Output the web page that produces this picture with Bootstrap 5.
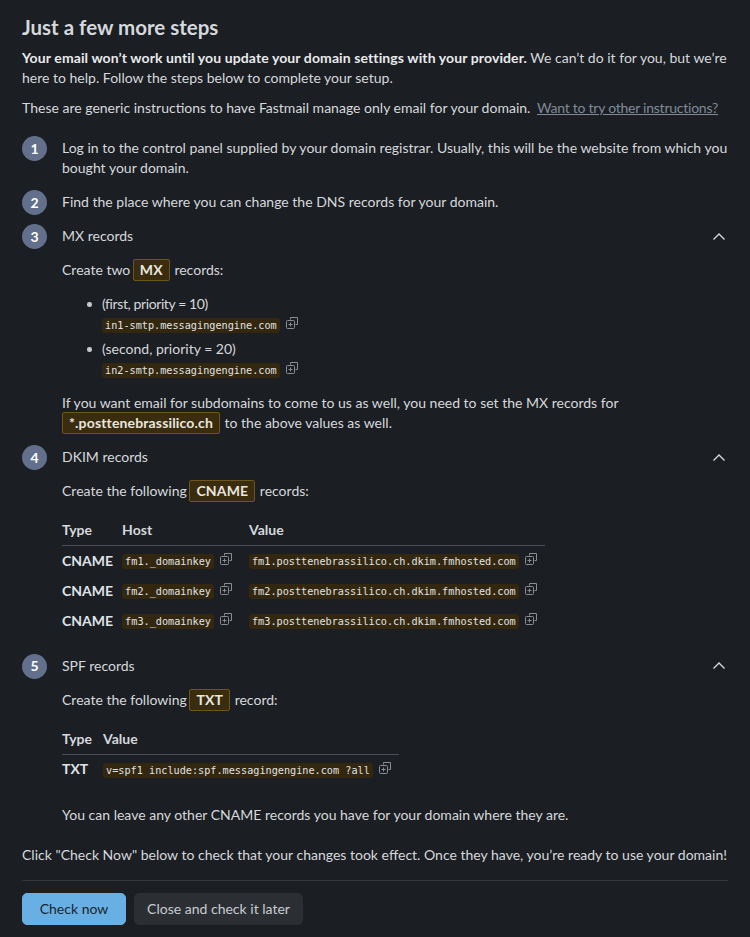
<!DOCTYPE html>
<html lang="en">
<head>
  <meta charset="UTF-8">
  <meta name="viewport" content="width=device-width, initial-scale=1">
  <title>Just a few more steps</title>
  <link href="https://cdn.jsdelivr.net/npm/bootstrap@5.3.0/dist/css/bootstrap.min.css" rel="stylesheet">
  <script src="https://cdn.jsdelivr.net/npm/bootstrap@5.3.0/dist/js/bootstrap.bundle.min.js"></script>
  <style>
    body { background: #1b1e22; color: #d5d8dc; font-family: "Lato", "Liberation Sans", sans-serif; font-size: 14.03px; line-height: 20px; }
    .wrap { padding: 15px 22px 12px; }
    h1.title { font-size: 20.5px; font-weight: 700; line-height: 24px; margin: 0 0 9px; color: #d5d8dc; }
    .para { margin: 0 0 10px; }
    .para strong { color: #e8eaec; letter-spacing: .1px; }
    .para a { color: #7f8a99; letter-spacing: -.25px; margin-left: 3px; }
    .para-check { margin-top: 8px; }
    .steps { margin-top: 18px; }
    .step { display: flex; gap: 15px; }
    .num { flex: 0 0 25px; width: 25px; height: 25px; border-radius: 50%; background: #62708b; color: #fff; font-weight: 700; display: flex; align-items: center; justify-content: center; }
    .step-body { flex: 1; min-width: 0; padding-top: 2px; margin-bottom: 12px; }
    .step-head { display: flex; justify-content: space-between; align-items: center; }
    .chev { width: 12px; height: 7px; margin-right: 3px; }
    .line { margin: 14px 0 0; }
    .line-after { margin-top: 21px; }
    .tag { display: inline-block; background: #3a2c0f; border: 1px solid #6f5518; border-radius: 2px; padding: 0 6px; font-weight: 700; color: #e8e6df; line-height: 20px; letter-spacing: .15px; margin: -1px 1px -1px -1px; }
    .code-row { display: flex; align-items: center; }
    .mono { font-family: "DejaVu Sans Mono", "Liberation Mono", monospace; font-size: 10.2px; background: #33280f; color: #e0e2e4; border-radius: 3px; padding: 2px 3px; line-height: 11px; display: block; white-space: nowrap; }
    .copy { flex: 0 0 12px; width: 12px; height: 12px; margin: -5px 0 0 6px; }
    .rec-list { list-style: none; margin: 14px 0 0; padding: 0 0 0 40px; }
    .rec-list li { margin-bottom: 3px; position: relative; }
    .rec-list li::before { content: ""; position: absolute; left: -15px; top: 8px; width: 4.5px; height: 4.5px; border-radius: 50%; background: #c6c9ce; }
    .rec-list .code-row { height: 22px; }
    .tight { letter-spacing: -.4px; }
    .rec-table { border-collapse: collapse; margin: 14px 0 6px; }
    .rec-table th { font-weight: 700; padding: 5px 9px 5px 0; border-bottom: 1px solid #4a4e54; }
    .rec-table td { padding: 0 9px 0 0; height: 30px; }
    .rec-table .code-row { padding-top: 2px; }
    .rec-table th:nth-child(2), .rec-table td:nth-child(2) { padding-right: 17px; }
    .rec-table th:last-child, .rec-table td:last-child { padding-right: 8px; }
    .rec-table td:first-child { font-weight: 700; color: #dfe3e8; }
    .rec-table.spf th:first-child, .rec-table.spf td:first-child { padding-right: 11px; }
    .divider { border: 0; border-top: 1px solid #34373c; opacity: 1; margin: 15px 0 12px; }
    .btn-go, .btn-later { font-size: 14.03px; line-height: 20px; padding: 5px 0; border-radius: 5px; }
    .btn-go { background: #68b0e4; border-color: #68b0e4; color: #1b2530; width: 104px; }
    .btn-later { background: #2b2f34; border-color: #2b2f34; color: #c8cbd0; width: 169px; }
  </style>
</head>
<body>
  <div class="wrap">
    <h1 class="title">Just a few more steps</h1>
    <p class="para"><strong>Your email won’t work until you update your domain settings with your provider.</strong> We can’t do it for you, but we’re here to help. Follow the steps below to complete your setup.</p>
    <p class="para">These are generic instructions to have Fastmail manage only email for your domain. <a href="#">Want to try other instructions?</a></p>

    <div class="steps">
      <div class="step">
        <div class="num">1</div>
        <div class="step-body">Log in to the control panel supplied by your domain registrar. Usually, this will be the website from which you bought your domain.</div>
      </div>
      <div class="step">
        <div class="num">2</div>
        <div class="step-body">Find the place where you can change the DNS records for your domain.</div>
      </div>
      <div class="step">
        <div class="num">3</div>
        <div class="step-body">
          <div class="step-head"><span>MX records</span><svg class="chev" viewBox="0 0 12 7" fill="none" stroke="#d5d8dc" stroke-width="1.4"><path d="M.5 6.500L6 1l5.500 5.500"/></svg></div>
          <p class="line">Create two <span class="tag">MX</span> records:</p>
          <ul class="rec-list">
            <li><span class="tight">(first, priority = 10)</span><div class="code-row"><code class="mono">in1-smtp.messagingengine.com</code><svg class="copy" viewBox="0 0 12 12" fill="none" stroke="#8a8d92"><use href="#copy-ic"/></svg></div></li>
            <li>(second, priority = 20)<div class="code-row"><code class="mono">in2-smtp.messagingengine.com</code><svg class="copy" viewBox="0 0 12 12" fill="none" stroke="#8a8d92"><use href="#copy-ic"/></svg></div></li>
          </ul>
          <p class="line mt-2 pt-1">If you want email for subdomains to come to us as well, you need to set the MX records for<br><span class="tag ms-0">*.posttenebrassilico.ch</span> to the above values as well.</p>
        </div>
      </div>
      <div class="step">
        <div class="num">4</div>
        <div class="step-body">
          <div class="step-head"><span>DKIM records</span><svg class="chev" viewBox="0 0 12 7" fill="none" stroke="#d5d8dc" stroke-width="1.4"><path d="M.5 6.500L6 1l5.500 5.500"/></svg></div>
          <p class="line">Create the following <span class="tag">CNAME</span> records:</p>
          <table class="rec-table">
            <tr><th>Type</th><th>Host</th><th>Value</th></tr>
            <tr><td>CNAME</td><td><div class="code-row"><code class="mono">fm1._domainkey</code><svg class="copy" viewBox="0 0 12 12" fill="none" stroke="#8a8d92"><use href="#copy-ic"/></svg></div></td><td><div class="code-row"><code class="mono">fm1.posttenebrassilico.ch.dkim.fmhosted.com</code><svg class="copy" viewBox="0 0 12 12" fill="none" stroke="#8a8d92"><use href="#copy-ic"/></svg></div></td></tr>
            <tr><td>CNAME</td><td><div class="code-row"><code class="mono">fm2._domainkey</code><svg class="copy" viewBox="0 0 12 12" fill="none" stroke="#8a8d92"><use href="#copy-ic"/></svg></div></td><td><div class="code-row"><code class="mono">fm2.posttenebrassilico.ch.dkim.fmhosted.com</code><svg class="copy" viewBox="0 0 12 12" fill="none" stroke="#8a8d92"><use href="#copy-ic"/></svg></div></td></tr>
            <tr><td>CNAME</td><td><div class="code-row"><code class="mono">fm3._domainkey</code><svg class="copy" viewBox="0 0 12 12" fill="none" stroke="#8a8d92"><use href="#copy-ic"/></svg></div></td><td><div class="code-row"><code class="mono">fm3.posttenebrassilico.ch.dkim.fmhosted.com</code><svg class="copy" viewBox="0 0 12 12" fill="none" stroke="#8a8d92"><use href="#copy-ic"/></svg></div></td></tr>
          </table>
        </div>
      </div>
      <div class="step">
        <div class="num">5</div>
        <div class="step-body">
          <div class="step-head"><span>SPF records</span><svg class="chev" viewBox="0 0 12 7" fill="none" stroke="#d5d8dc" stroke-width="1.4"><path d="M.5 6.500L6 1l5.500 5.500"/></svg></div>
          <p class="line">Create the following <span class="tag">TXT</span> record:</p>
          <table class="rec-table spf">
            <tr><th>Type</th><th>Value</th></tr>
            <tr><td>TXT</td><td><div class="code-row"><code class="mono">v=spf1 include:spf.messagingengine.com ?all</code><svg class="copy" viewBox="0 0 12 12" fill="none" stroke="#8a8d92"><use href="#copy-ic"/></svg></div></td></tr>
          </table>
          <p class="line line-after">You can leave any other CNAME records you have for your domain where they are.</p>
        </div>
      </div>
    </div>

    <p class="para para-check">Click "Check Now" below to check that your changes took effect. Once they have, you’re ready to use your domain!</p>
    <hr class="divider">
    <div class="d-flex gap-2">
      <button class="btn btn-go" type="button">Check now</button>
      <button class="btn btn-later" type="button">Close and check it later</button>
    </div>
  </div>

  <svg width="0" height="0" class="d-none">
    <symbol id="copy-ic" viewBox="0 0 12 12">
      <path d="M4.500 2.500V.5h7v7h-2"/>
      <rect x=".5" y="3.500" width="8" height="8" rx="1"/>
      <path d="M4.500 5.500v4M2.500 7.500h4"/>
    </symbol>
  </svg>
</body>
</html>
